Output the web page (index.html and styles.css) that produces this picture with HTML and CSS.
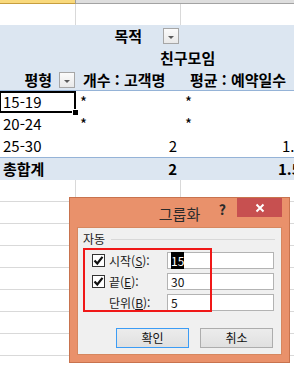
FILE: index.html
```html
<!DOCTYPE html>
<html lang="ko">
<head>
  <meta charset="UTF-8">
  <title>피벗 테이블 - 그룹화</title>
  <link rel="stylesheet" href="styles.css">
</head>
<body>

  <div class="sheet">
    <div class="colhead">
      <div class="colhead-sel"></div>
      <div class="colhead-rest"></div>
    </div>
    <div class="row blank first"><div class="cell"></div><div class="cell"></div><div class="cell"></div></div>

    <div class="pivot-head">
      <div class="row">
        <div class="cell"></div>
        <div class="cell flex-end gap-wide">목적
          <span class="dropdown"><svg width="8" height="5" viewBox="0 0 8 5"><path d="M1 1h6L4 4z" fill="#5a5a5a"/></svg></span>
        </div>
        <div class="cell"></div>
      </div>
      <div class="row single">
        <div class="span-label">친구모임</div>
      </div>
      <div class="row short">
        <div class="cell flex-end gap-narrow">평형
          <span class="dropdown"><svg width="8" height="5" viewBox="0 0 8 5"><path d="M1 1h6L4 4z" fill="#5a5a5a"/></svg></span>
        </div>
        <div class="cell pad-b">개수 : 고객명</div>
        <div class="cell pad-c">평균 : 예약일수</div>
      </div>
    </div>

    <div class="pivot-body">
      <div class="row">
        <div class="cell label selected">15-19</div>
        <div class="cell star">*</div>
        <div class="cell star">*</div>
      </div>
      <div class="row">
        <div class="cell label">20-24</div>
        <div class="cell star">*</div>
        <div class="cell star">*</div>
      </div>
      <div class="row">
        <div class="cell label">25-30</div>
        <div class="cell num">2</div>
        <div class="cell num-c">1.5</div>
      </div>
    </div>

    <div class="row total">
      <div class="cell label">총합계</div>
      <div class="cell num">2</div>
      <div class="cell num-c">1.5</div>
    </div>

    <div class="row blank"><div class="cell"></div><div class="cell"></div><div class="cell"></div></div>
    <div class="row blank"><div class="cell"></div><div class="cell"></div><div class="cell"></div></div>
    <div class="row blank"><div class="cell"></div><div class="cell"></div><div class="cell"></div></div>
    <div class="row blank"><div class="cell"></div><div class="cell"></div><div class="cell"></div></div>
    <div class="row blank"><div class="cell"></div><div class="cell"></div><div class="cell"></div></div>
    <div class="row blank"><div class="cell"></div><div class="cell"></div><div class="cell"></div></div>
    <div class="row blank"><div class="cell"></div><div class="cell"></div><div class="cell"></div></div>
    <div class="row blank"><div class="cell"></div><div class="cell"></div><div class="cell"></div></div>
  </div>

  <!-- Grouping dialog -->
  <div class="dialog">
    <div class="dlg-title">
      <span></span>
      <span class="dlg-caption">그룹화</span>
      <div class="dlg-controls">
        <span class="help">?</span>
        <span class="close"><svg width="10" height="10" viewBox="0 0 10 10"><path d="M1.5 1.5l7 7M8.5 1.5l-7 7" stroke="#fff" stroke-width="2"/></svg></span>
      </div>
    </div>
    <div class="dlg-body">
      <div class="legend">자동</div>
      <div class="fields">
        <div class="field">
          <span class="check"><svg width="11" height="11" viewBox="0 0 11 11"><path d="M1.5 5.5l2.8 3L9.5 1.8" fill="none" stroke="#111" stroke-width="2.2"/></svg></span>
          <label>시작(<u>S</u>):</label>
          <div class="input"><span class="hl">15</span></div>
        </div>
        <div class="field">
          <span class="check"><svg width="11" height="11" viewBox="0 0 11 11"><path d="M1.5 5.5l2.8 3L9.5 1.8" fill="none" stroke="#111" stroke-width="2.2"/></svg></span>
          <label>끝(<u>E</u>):</label>
          <div class="input">30</div>
        </div>
        <div class="field">
          <span class="check-space"></span>
          <label>단위(<u>B</u>):</label>
          <div class="input">5</div>
        </div>
      </div>
      <div class="buttons">
        <button class="btn default">확인</button>
        <button class="btn">취소</button>
      </div>
      <div class="mark"></div>
    </div>
  </div>

</body>
</html>
```

FILE: styles.css
```css
body {
  margin: 0;
  width: 294px;
  height: 365px;
  overflow: hidden;
  position: relative;
  background: #fff;
  font-family: "Noto Sans CJK KR", "Noto Sans", sans-serif;
  color: #000;
}
.sheet {
  width: 294px;
}
.colhead {
  display: grid;
  grid-template-columns: 76px 1fr;
  height: 4px;
}
.colhead-sel {
  background: #f9d97c;
  border-bottom: 1px solid #c79e3e;
  border-right: 1px solid #9d9d9d;
}
.colhead-rest {
  background: #dedede;
  border-bottom: 1px solid #a3a3a3;
}
.row {
  display: grid;
  grid-template-columns: 76px 105px 1fr;
  height: 22px;
  box-sizing: border-box;
  font-size: 15px;
  line-height: 22px;
  white-space: nowrap;
}
.cell {
  box-sizing: border-box;
  overflow: hidden;
  min-width: 0;
}
.blank {
  border-bottom: 1px solid #d9d9d9;
}
.blank.first {
  height: 21px;
  border-bottom: none;
}
.blank .cell:not(:last-child) {
  border-right: 1px solid #d9d9d9;
}

/* pivot header */
.pivot-head {
  background: #dce6f1;
  border-bottom: 1px solid #95b3d7;
  font-weight: bold;
}
.row.short {
  height: 21px;
}
.flex-end {
  display: flex;
  justify-content: flex-end;
  align-items: center;
  overflow: visible;
}
.gap-wide {
  gap: 21px;
  padding-right: 2px;
}
.gap-narrow {
  gap: 7px;
  padding-right: 1px;
}
.single {
  display: block;
}
.span-label {
  padding-left: 160px;
}
.pad-b {
  padding-left: 7px;
}
.pad-c {
  padding-left: 9px;
}
.dropdown {
  width: 14px;
  height: 14px;
  border: 1px solid #a6a6a6;
  background: linear-gradient(#fbfbfb, #e9e9e9);
  display: flex;
  align-items: center;
  justify-content: center;
  padding-top: 2px;
  box-sizing: content-box;
  height: 12px;
}

/* pivot body */
.label {
  padding-left: 3px;
}
.star {
  padding-left: 4px;
}
.num {
  text-align: right;
  padding-right: 4px;
}
.num-c {
  padding-left: 101px;
}
.selected {
  position: relative;
  overflow: visible;
}
.selected::after {
  content: "";
  position: absolute;
  left: -1px;
  top: 0;
  right: 0;
  bottom: 0;
  border: 2px solid #000;
}
.selected::before {
  content: "";
  position: absolute;
  right: -3px;
  bottom: -3px;
  width: 5px;
  height: 5px;
  background: #000;
  border: 1px solid #fff;
  z-index: 1;
}
.total {
  height: 23px;
  background: #dce6f1;
  border-top: 1px solid #95b3d7;
  font-weight: bold;
}
.total .num-c {
  padding-left: 97px;
}

/* dialog */
.dialog {
  position: absolute;
  left: 69px;
  top: 197px;
  width: 221px;
  height: 166px;
  box-sizing: border-box;
  background: #e9916b;
  border: 1px solid #c8734e;
  display: flex;
  flex-direction: column;
  font-size: 12px;
}
.dlg-title {
  height: 29px;
  display: grid;
  grid-template-columns: 1fr auto 1fr;
}
.dlg-caption {
  font-size: 15px;
  line-height: 29px;
  color: #2b2b2b;
  padding-top: 1px;
}
.dlg-controls {
  display: flex;
  justify-content: flex-end;
  align-items: flex-start;
  padding-right: 7px;
}
.help {
  font-weight: bold;
  font-size: 14px;
  line-height: 20px;
  color: #2a2a2a;
  margin-right: 11px;
  margin-top: 1px;
}
.close {
  width: 45px;
  height: 19px;
  background: #c75050;
  display: flex;
  align-items: center;
  justify-content: center;
}
.dlg-body {
  flex: 1;
  margin: 0 7px 7px;
  background: #f0f0f0;
  border: 1px solid #d6875f;
  position: relative;
  padding-top: 4px;
}
.legend {
  display: flex;
  align-items: center;
  gap: 4px;
  height: 14px;
  line-height: 14px;
  margin: 0 6px 0 5px;
  color: #1a1a1a;
}
.legend::after {
  content: "";
  flex: 1;
  height: 1px;
  background: #d8d8d8;
  margin-left: 2px;
}
.fields {
  margin-top: 4px;
}
.field {
  display: flex;
  align-items: center;
  height: 21px;
  padding-left: 14px;
}
.check {
  width: 11px;
  height: 11px;
  border: 1px solid #333;
  background: #fff;
  display: flex;
}
.check-space {
  width: 13px;
}
.field label {
  margin-left: 4px;
  width: 58px;
  color: #1a1a1a;
  line-height: 17px;
}
.input {
  width: 107px;
  height: 17px;
  box-sizing: border-box;
  border: 1px solid #b3b3b3;
  background: #fff;
  padding-left: 3px;
  line-height: 15px;
  color: #111;
}
.hl {
  background: #000;
  color: #fff;
}
.buttons {
  display: flex;
  justify-content: flex-end;
  gap: 11px;
  margin-top: 15px;
  padding-right: 8px;
}
.btn {
  width: 73px;
  height: 20px;
  padding: 0;
  font-family: inherit;
  font-size: 12px;
  line-height: 18px;
  color: #111;
  background: linear-gradient(#ececec, #e0e0e0);
  border: 1px solid #adadad;
}
.btn.default {
  border-color: #3c9cf5;
}
.mark {
  position: absolute;
  left: 5px;
  top: 20px;
  width: 129px;
  height: 64px;
  box-sizing: border-box;
  border: 2px solid #f01818;
}
```
